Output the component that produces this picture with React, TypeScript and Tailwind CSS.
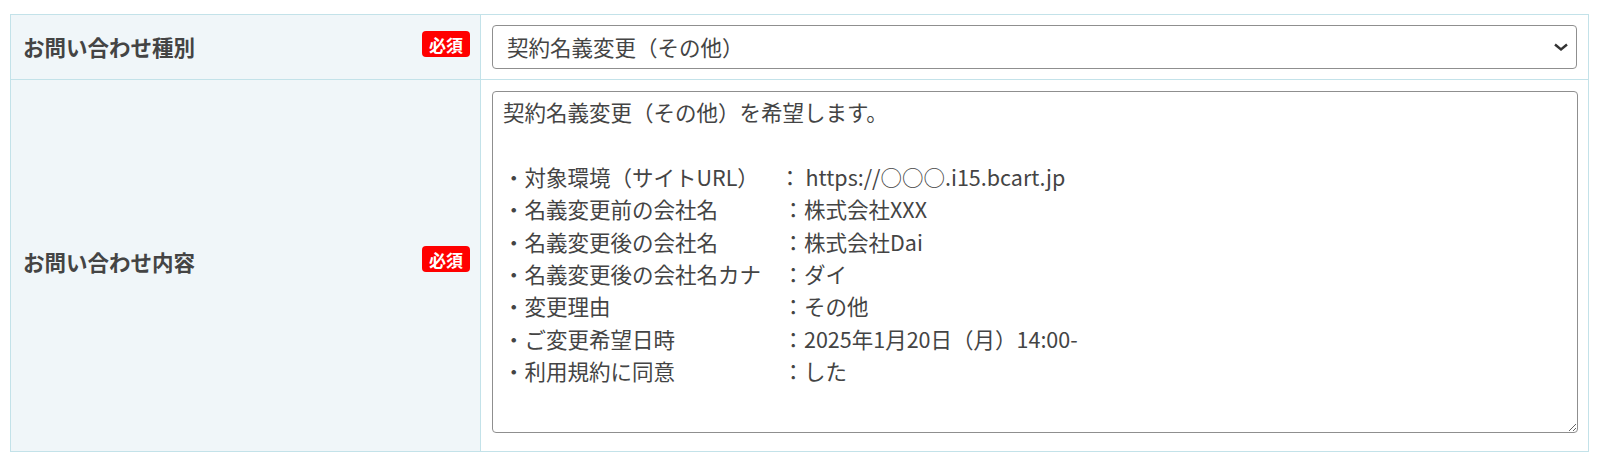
import React from 'react';

const body = [
  '契約名義変更（その他）を希望します。',
  '',
  '・対象環境（サイトURL）　  ： https://○○○.i15.bcart.jp',
  '・名義変更前の会社名　　　：株式会社XXX',
  '・名義変更後の会社名　　　：株式会社Dai',
  '・名義変更後の会社名カナ　：ダイ',
  '・変更理由　　　　　　　　：その他',
  '・ご変更希望日時　　　　　：2025年1月20日（月）14:00-',
  '・利用規約に同意　　　　　：した',
].join('\n');

const Required = () => (
  <span className="inline-flex items-center justify-center w-[48px] h-[26px] mb-[6px] rounded-[4px] bg-[#ff0000] text-white text-[17px] font-bold leading-none">
    必須
  </span>
);

const App = () => {
  return (
    <div className="w-[1600px] h-[460px] bg-white pt-[14px] px-[10px] font-['Noto_Sans_CJK_JP','Noto_Sans',sans-serif] text-[#444]">
      <div className="w-[1579px] border border-[#c3e2e9] grid grid-cols-[470px_1fr]">
        {/* 種別 */}
        <div className="flex items-center justify-between pl-[12px] pr-[10px] bg-[#f0f6f9] border-r border-b border-[#c3e2e9]">
          <span className="text-[21.5px] font-bold">お問い合わせ種別</span>
          <Required />
        </div>
        <div className="px-[11px] py-[10px] border-b border-[#c3e2e9]">
          <div className="relative">
            <select
              defaultValue="other"
              className="block w-full h-[44px] appearance-none rounded-[4px] border border-[#8f8f8f] bg-white pl-[14px] pr-10 text-[21.5px] text-[#444] font-['Noto_Sans_CJK_JP',sans-serif]"
            >
              <option value="other">契約名義変更（その他）</option>
            </select>
            <svg
              className="pointer-events-none absolute right-[8px] top-1/2 -translate-y-1/2"
              width="16"
              height="10"
              viewBox="0 0 16 10"
            >
              <polyline points="2,2.5 8,7.5 14,2.5" fill="none" stroke="#333" strokeWidth="2.4" />
            </svg>
          </div>
        </div>

        {/* 内容 */}
        <div className="flex items-center justify-between pl-[12px] pr-[10px] pb-[7px] bg-[#f0f6f9] border-r border-[#c3e2e9]">
          <span className="text-[21.5px] font-bold">お問い合わせ内容</span>
          <Required />
        </div>
        <div className="pl-[11px] pr-[10px] pt-[11px] pb-[18px]">
          <textarea
            defaultValue={body}
            className="block w-full h-[342px] rounded-[4px] border border-[#8f8f8f] bg-white px-[10px] pt-[4px] text-[21.5px] leading-[32.4px] text-[#444] font-['Noto_Sans_CJK_JP',sans-serif] resize-y"
          />
        </div>
      </div>
    </div>
  );
};

export default App;
